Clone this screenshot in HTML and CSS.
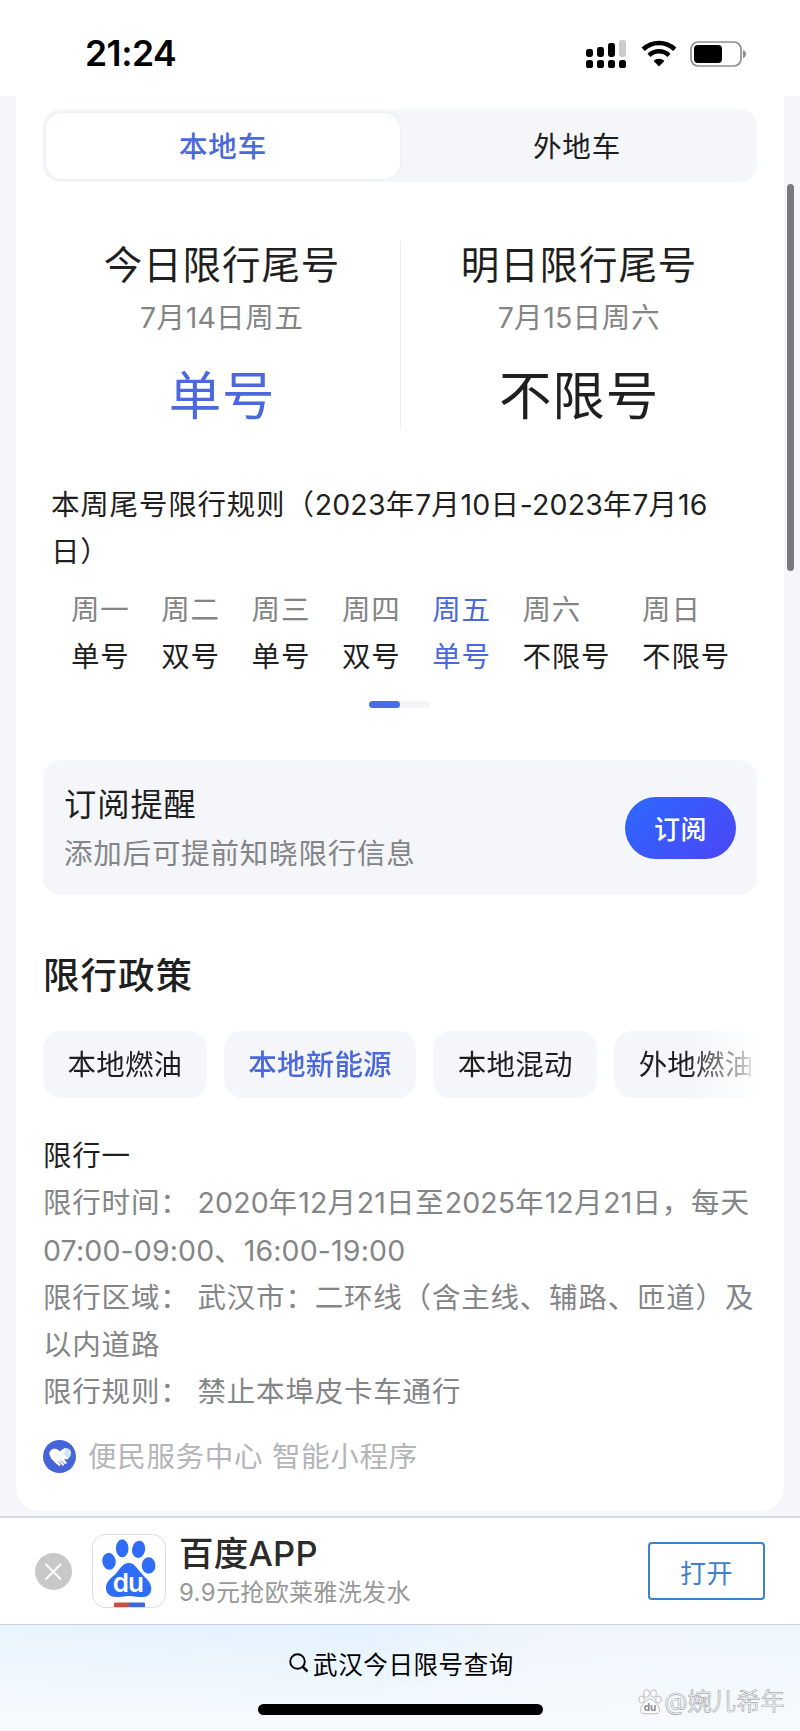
FILE: index.html
```html
<!DOCTYPE html>
<html lang="zh-CN">
<head>
<meta charset="utf-8">
<title>武汉今日限号查询</title>
<link rel="stylesheet" href="styles.css">
</head>
<body>
<header class="status">
  <span class="clock">21:24</span>
  <svg class="signal" width="41" height="30" viewBox="0 0 41 30">
    <rect x="0" y="10" width="7" height="8" rx="2.4"/><rect x="11" y="8" width="7" height="10" rx="2.4"/><rect x="22" y="4" width="7" height="14" rx="2.4"/><rect x="33" y="1" width="7" height="17" rx="2.4" fill="#cbcbcb"/>
    <rect x="0" y="21" width="7" height="8" rx="2.6"/><rect x="11" y="21" width="7" height="8" rx="2.6"/><rect x="22" y="21" width="7" height="8" rx="2.6"/><rect x="33" y="21" width="7" height="8" rx="2.6"/>
  </svg>
  <svg class="wifi" width="36" height="28" viewBox="0 0 36 28">
    <path d="M2.2 9.3C11 .9 25 .9 33.800 9.300" fill="none" stroke="#000" stroke-width="4.700"/>
    <path d="M8 15.300C13.800 10 22.200 10 28 15.300" fill="none" stroke="#000" stroke-width="4.500"/>
    <path d="M18 26.500L12.600 21C15.500 18 20.500 18 23.400 21Z"/>
  </svg>
  <svg class="battery" width="57" height="28" viewBox="0 0 57 28">
    <rect x="1" y="2" width="50" height="24" rx="7" fill="none" stroke="#8e8e8e" stroke-width="1.700"/>
    <rect x="4" y="5" width="28" height="18" rx="4"/>
    <path d="M53 10Q56 11 56 14T53 18Z" fill="#8e8e8e"/>
  </svg>
</header>

<div class="page">
  <main class="card">
    <div class="tabs"><div class="tab active">本地车</div><div class="tab">外地车</div></div>

    <section class="today">
      <div class="col"><h2>今日限行尾号</h2><p><span class="n">7</span>月<span class="n">14</span>日周五</p><strong class="blue">单号</strong></div>
      <div class="col"><h2>明日限行尾号</h2><p><span class="n">7</span>月<span class="n">15</span>日周六</p><strong>不限号</strong></div>
    </section>

    <p class="rule">本周尾号限行规则（<span class="n">2023</span>年<span class="n">7</span>月<span class="n">10</span>日<span class="n">-2023</span>年<span class="n">7</span>月<span class="n">16</span><br>日）</p>

    <div class="week">
      <div><span>周一</span><b>单号</b></div>
      <div><span>周二</span><b>双号</b></div>
      <div><span>周三</span><b>单号</b></div>
      <div><span>周四</span><b>双号</b></div>
      <div class="on"><span>周五</span><b>单号</b></div>
      <div><span>周六</span><b>不限号</b></div>
      <div><span>周日</span><b>不限号</b></div>
    </div>
    <div class="pager"><i></i></div>

    <section class="subscribe">
      <div><h3>订阅提醒</h3><p>添加后可提前知晓限行信息</p></div>
      <button class="sub-btn">订阅</button>
    </section>

    <h2 class="policy-title">限行政策</h2>
    <div class="chips">
      <span>本地燃油</span><span class="active">本地新能源</span><span>本地混动</span><span>外地燃油</span>
    </div>

    <section class="policy">
      <h4>限行一</h4>
      <p>限行时间：<i></i><span class="n">2020</span>年<span class="n">12</span>月<span class="n">21</span>日至<span class="n">2025</span>年<span class="n">12</span>月<span class="n">21</span>日，每天<br><span class="n">07:00-09:00</span>、<span class="n">16:00-19:00</span></p>
      <p>限行区域：<i></i>武汉市：二环线（含主线、辅路、匝道）及<br>以内道路</p>
      <p>限行规则：<i></i>禁止本埠皮卡车通行</p>
    </section>

    <footer class="source">
      <svg width="33" height="33" viewBox="0 0 33 33">
        <circle cx="16.500" cy="16.500" r="16.500" fill="#4663d8"/>
        <path d="M16 10.500C12 6.500 5.500 9.500 6.500 14.500C7.200 18 11.500 22.500 15.500 25.500C17 26.500 18 25.500 17.200 24.300L19.500 25.500C21 26 21.600 24.800 20.800 23.800L22.500 24C24 23.800 24 22.500 23 21.500L21 19L24.500 19.500Q28 16 28 12.500C27.500 7.500 21 7 18.500 10L14.500 14.500C15.500 16.500 18 16 20.500 13.500" fill="#fff"/>
        <path d="M20.500 13.500L25.500 18.500Q28 16 28 12.500C27.600 9.500 24.500 8 21.500 8.700Q23 10.500 20.500 13.500Z" fill="#c9e8fb"/>
        <path d="M15.500 21.500L18.500 25M18 20.500L21.500 24.200" stroke="#4663d8" stroke-width=".9"/>
      </svg>
      <span>便民服务中心 智能小程序</span>
    </footer>
  </main>
  <div class="scrollbar"></div>
</div>

<aside class="app-bar">
  <svg class="close" width="37" height="37" viewBox="0 0 37 37"><circle cx="18.500" cy="18.500" r="18.500" fill="#c8c8c8"/><path d="M10.500 11L26 26.500M26 11L10.500 26.500" stroke="#fff" stroke-width="1.900"/></svg>
  <svg class="logo" width="74" height="74" viewBox="0 0 74 74">
    <rect x=".5" y=".5" width="73" height="73" rx="13" fill="#fff" stroke="#dcdcdc"/>
    <g fill="#2f6df6">
      <ellipse cx="17" cy="27.300" rx="6.700" ry="8.500" transform="rotate(-8 17 27.300)"/>
      <ellipse cx="30.200" cy="14.300" rx="6.300" ry="9"/>
      <ellipse cx="46.600" cy="15.300" rx="6.500" ry="8.700" transform="rotate(10 46.600 15.300)"/>
      <ellipse cx="56.600" cy="31.500" rx="6.900" ry="8.300"/>
      <path d="M36.800 29C43 29 45 35 50 40C56 46 60 50 59.200 56C58 64 50 63.500 44 62.700Q37 61.500 30 62.700C23 63.700 15 63 14 55C13.500 48 18 45 23.500 40C28 35 30.500 29 36.800 29Z"/>
    </g>
    <text x="36.300" y="58.300" text-anchor="middle" textLength="31" class="du">du</text>
    <path d="M22 73V69.500Q22 68.500 23 68.500H37V73Z" fill="#c9503c"/><path d="M37 73V68.500H52Q53 68.500 53 69.500V73Z" fill="#3b68dc"/>
  </svg>
  <div class="app-text"><strong>百度APP</strong><span>9.9元抢欧莱雅洗发水</span></div>
  <button class="open">打开</button>
</aside>

<div class="bottom">
  <div class="query">
    <svg width="20" height="20" viewBox="0 0 20 20"><circle cx="8.500" cy="8.500" r="7.300" fill="none" stroke="#000" stroke-width="1.900"/><path d="M13.500 13.500L18.500 18.500" stroke="#000" stroke-width="2.500"/></svg>
    <span>武汉今日限号查询</span>
  </div>
  <div class="home"></div>
  <div class="mark">
    <svg width="24" height="26" viewBox="0 0 24 26">
      <g fill="#fff" stroke="#aaa" stroke-width=".8"><ellipse cx="3.600" cy="10.500" rx="2.800" ry="3.500"/><ellipse cx="8.500" cy="4.500" rx="2.900" ry="3.800"/><ellipse cx="15.500" cy="4.500" rx="2.900" ry="3.800"/><ellipse cx="20.400" cy="10.500" rx="2.800" ry="3.500"/>
      <path d="M12 10C15 10 16.500 13 19 15.500C22 18.500 23 24.500 18 24.800H6C1 24.500 2 18.500 5 15.500C7.500 13 9 10 12 10Z"/></g>
      <text x="12" y="22" text-anchor="middle" class="du-small">du</text>
    </svg>
    <span>@婉儿希年</span>
  </div>
</div>
</body>
</html>
```
FILE: styles.css
```css
* { box-sizing: border-box; }
body, h2, h3, h4, p { margin: 0; font-weight: 400; }
body {
  width: 800px;
  height: 1731px;
  overflow: hidden;
  background: #fff;
  color: #1f1f1f;
  font-family: Inter, "Noto Sans CJK SC", sans-serif;
  font-size: 28.500px;
  letter-spacing: .8px;
  white-space: nowrap;
}
button { font: inherit; letter-spacing: inherit; border: 0; padding: 0; }
.n { letter-spacing: .15px; }
.blue { color: #4c69dc; }

.status { height: 96px; padding: 11px 53px 0 85px; display: flex; align-items: center; }
.clock { flex: 1; color: #000; font-size: 35.500px; font-weight: 600; letter-spacing: -.5px; line-height: 78px; }
.wifi { margin: 0 13px 0 14px; }

.page { position: relative; height: 1420px; padding: 0 16px; background: #f4f6fa; }
.card { height: 1415px; padding: 13px 27px 0 28px; background: #fff; border-radius: 0 0 24px 24px; }
.scrollbar { position: absolute; left: 787px; top: 88px; width: 7px; height: 387px; border-radius: 4px; background: #797a7d; }

.tabs { display: flex; height: 73px; padding: 4px 3px 3px; margin-left: -1px; border-radius: 17px; background: #f4f6fa; }
.tab { flex: 1; line-height: 68px; text-align: center; border-radius: 16px; }
.tab.active { color: #4c69dc; font-weight: 500; background: #fff; box-shadow: 0 0 3px #e3e5ec; }

.today { display: flex; height: 187px; margin-top: 59px; }
.col { flex: 1; text-align: center; }
.col + .col { border-left: 1.5px solid #ececef; }
.col h2 { margin-top: 1px; font-size: 38.500px; letter-spacing: .9px; line-height: 46px; }
.col p { margin-top: 13px; line-height: 34px; color: #848484; }
.col strong { display: block; margin-top: 24px; font-size: 52.500px; font-weight: 400; letter-spacing: .8px; line-height: 74px; }

.rule { margin: 53px 0 0 7px; line-height: 47px; }
.week { display: flex; gap: 31.700px; margin: 11px 0 0 27px; }
.week span, .week b { display: block; font-weight: 400; line-height: 47px; }
.week span { color: #848484; }
.week .on span, .week .on b { color: #4c69dc; }
.pager { width: 61px; height: 7px; margin: 21px 0 0 325px; border-radius: 4px; background: #f5f5f7; }
.pager i { display: block; width: 31px; height: 7px; border-radius: 4px; background: #4c6be8; }

.subscribe { display: flex; justify-content: space-between; align-items: center; height: 135px; margin: 52px 0 0 -1px; padding: 0 21px; border-radius: 18px; background: #f4f6fa; }
.subscribe h3 { margin-top: 1px; font-size: 32.300px; letter-spacing: .9px; line-height: 50px; }
.subscribe p { line-height: 47px; color: #848587; }
.sub-btn { width: 111px; height: 62px; border-radius: 31px; background: linear-gradient(135deg, #2d69ff, #4b45f6); color: #fff; font-size: 26px; font-weight: 500; letter-spacing: .6px; }

.policy-title { margin: 53px 0 0 -1px; font-size: 36.500px; font-weight: 500; letter-spacing: 1px; line-height: 56px; }
.chips { display: flex; gap: 17px; height: 67px; margin: 27px 0 0 -1px; overflow: hidden; -webkit-mask: linear-gradient(90deg, #000 0 645px, rgba(0,0,0,.3) 700px, transparent 714px); mask: linear-gradient(90deg, #000 0 645px, rgba(0,0,0,.3) 700px, transparent 714px); }
.chips span { flex: none; padding: 0 24.500px; border-radius: 18px; background: #f4f6fa; line-height: 67px; letter-spacing: .2px; }
.chips .active { color: #4c69dc; font-weight: 500; }

.policy { margin: 34px 0 0 -1px; line-height: 47.300px; }
.policy p { color: #848587; }
.policy i { display: inline-block; width: 8px; }

.source { display: flex; align-items: center; gap: 12px; margin: 23px 0 0 -1px; line-height: 36px; letter-spacing: .7px; color: #b4b5b8; }

.app-bar { display: flex; align-items: center; height: 109px; padding: 0 35px; border-top: 2px solid #dadcde; border-bottom: 1px solid #c8d2da; background: #fff; }
.logo { margin: 0 13px 0 20px; }
.du { fill: #fff; font: 600 26px Inter, sans-serif; letter-spacing: 0; }
.app-text { flex: 1; }
.app-text strong { display: block; padding-top: 1px; color: #2b2b2b; font-size: 34.500px; font-weight: 500; letter-spacing: .2px; line-height: 42px; }
.app-text span { display: block; color: #999; font-size: 24px; letter-spacing: .35px; line-height: 36px; }
.open { width: 117px; height: 58px; border: 2px solid #3b82cf; border-radius: 4px; background: #fff; color: #3b82cf; font-size: 26px; letter-spacing: .6px; }

.bottom { position: relative; height: 106px; background: linear-gradient(180deg, #e6f4fe00 0%, #f6fafe 90%), linear-gradient(90deg, #e8f4fe, #e2f2fe 45%, #f1f5fc 70%, #eef6fe); }
.query { display: flex; justify-content: center; align-items: center; gap: 4px; height: 79px; padding: 0 0 3px 3px; color: #000; font-size: 24.500px; letter-spacing: .6px; }
.home { width: 285px; height: 11px; margin-left: 258px; border-radius: 6px; background: #000; }
.mark { position: absolute; right: 15px; bottom: 11px; display: flex; align-items: center; gap: 2px; font-size: 24px; letter-spacing: .3px; line-height: 36px; color: #fafbfd; -webkit-text-stroke: .7px #aaa; }
.du-small { fill: #888; stroke: none; -webkit-text-stroke: 0; font: 700 10px Inter, sans-serif; letter-spacing: 0; }
```
